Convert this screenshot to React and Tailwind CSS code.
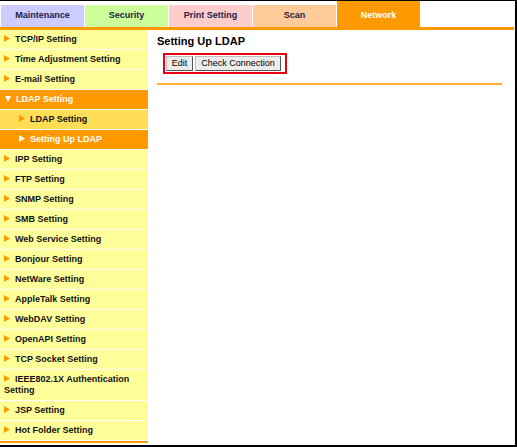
import React from "react";

const tabs = [
  { label: "Maintenance", bg: "bg-[#ccccff]" },
  { label: "Security", bg: "bg-[#ccff99]" },
  { label: "Print Setting", bg: "bg-[#ffcccc]" },
  { label: "Scan", bg: "bg-[#ffcc99]" },
];

const menu = [
  { label: "TCP/IP Setting" },
  { label: "Time Adjustment Setting" },
  { label: "E-mail Setting" },
  { label: "LDAP Setting", type: "open" },
  { label: "LDAP Setting", type: "sub" },
  { label: "Setting Up LDAP", type: "subActive" },
  { label: "IPP Setting" },
  { label: "FTP Setting" },
  { label: "SNMP Setting" },
  { label: "SMB Setting" },
  { label: "Web Service Setting" },
  { label: "Bonjour Setting" },
  { label: "NetWare Setting" },
  { label: "AppleTalk Setting" },
  { label: "WebDAV Setting" },
  { label: "OpenAPI Setting" },
  { label: "TCP Socket Setting" },
  { label: "IEEE802.1X Authentication Setting" },
  { label: "JSP Setting" },
  { label: "Hot Folder Setting" },
];

const Arrow = ({ color = "#ff9900", down = false }) => (
  <svg
    width="6"
    height="7"
    viewBox="0 0 6 7"
    className="inline-block align-[0px] mr-[5px]"
  >
    {down ? (
      <polygon points="0,1 6,1 3,7" fill={color} />
    ) : (
      <polygon points="0,0 6,3.5 0,7" fill={color} />
    )}
  </svg>
);

const MenuItem = ({ item }) => {
  let cls = "bg-[#ffff99] text-[#111] pl-[4px]";
  let arrow = <Arrow />;
  if (item.type === "open") {
    cls = "bg-[#ff9900] text-white pl-[5px]";
    arrow = <Arrow color="#ffffff" down />;
  } else if (item.type === "sub") {
    cls = "bg-[#ffdd55] text-[#111] pl-[19px]";
  } else if (item.type === "subActive") {
    cls = "bg-[#ff9900] text-white pl-[19px]";
    arrow = <Arrow color="#ffffff" />;
  }
  return (
    <div
      className={`${cls} pr-[2px] py-[4px] leading-[11px] text-[9px] font-bold border-b border-white`}
    >
      {arrow}
      {item.label}
    </div>
  );
};

const App = () => {
  return (
    <div className="w-[517px] h-[447px] bg-white border-t border-r-2 border-b-2 border-black flex flex-col overflow-hidden font-['Liberation_Sans',Arial,sans-serif]">
      {/* top tabs */}
      <div className="h-[26px] flex items-end pl-[1px]">
        {tabs.map((t) => (
          <div
            key={t.label}
            className={`${t.bg} w-[83px] h-[22px] mr-[1px] flex items-center justify-center text-[9px] font-bold text-[#222244]`}
          >
            {t.label}
          </div>
        ))}
        <div className="bg-[#ff9900] w-[83px] h-[26px] flex items-center justify-center pt-[4px] text-[9px] font-bold text-white">
          Network
        </div>
      </div>
      <div className="h-[3px] bg-[#ff9900] mr-[1px]" />

      <div className="flex flex-1">
        {/* side menu */}
        <div className="w-[148px] flex flex-col">
          {menu.map((m, i) => (
            <MenuItem key={i} item={m} />
          ))}
          <div className="h-[2px] bg-[#ff9900]" />
        </div>

        {/* content */}
        <div className="ml-[9px] w-[345px]">
          <div className="pt-[5px] text-[11px] leading-[13px] font-bold text-black">
            Setting Up LDAP
          </div>
          <div className="mt-[5px] ml-[6px] w-fit flex items-center gap-[2px] border-2 border-[#e60012] pl-[1px] pr-[4px] py-[1px]">
            <button className="h-[15px] w-[27px] bg-[#ececec] border border-[#bdbdbd] border-r-[#555] border-b-[#555] text-[9px] leading-none text-black">
              Edit
            </button>
            <button className="h-[15px] w-[86px] bg-[#ececec] border border-[#bdbdbd] border-r-[#555] border-b-[#555] text-[9px] leading-none text-black">
              Check Connection
            </button>
          </div>
          <div className="mt-[9px] h-[2px] bg-[#ffad33]" />
        </div>
      </div>
    </div>
  );
};

export default App;
